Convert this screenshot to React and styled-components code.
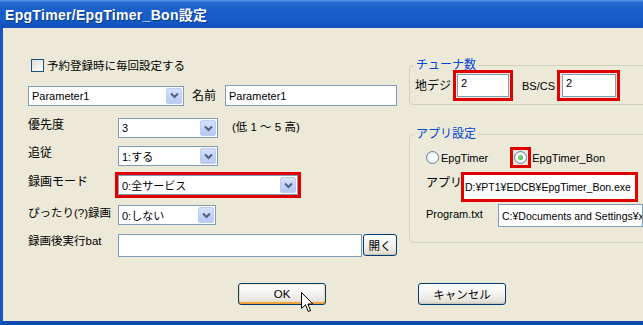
import React from 'react';
import styled, { createGlobalStyle, css } from 'styled-components';

const Global = createGlobalStyle`
  html, body {
    margin: 0;
    padding: 0;
    background: #ECE9D8;
  }
`;

const Window = styled.div`
  position: relative;
  width: 643px;
  height: 325px;
  overflow: hidden;
  display: flex;
  flex-direction: column;
  background: #ECE9D8;
  font-family: "Liberation Sans", "Noto Sans CJK JP", sans-serif;
  font-size: 12px;
  color: #000;
`;

const TitleBar = styled.div`
  height: 28px;
  flex: none;
  display: flex;
  align-items: center;
  padding-left: 5px;
  box-sizing: border-box;
  background: linear-gradient(to bottom, #5A9AEC 0%, #2A6DD6 8%, #1A5FCB 30%, #165BC6 70%, #0F50B8 100%);
  color: #fff;
  font-weight: bold;
  font-size: 14px;
  letter-spacing: 0.3px;
  text-shadow: 1px 1px 0 #0A3A8A;
`;

const Frame = styled.div`
  flex: 1;
  display: flex;
  flex-direction: column;
  border-left: 3px solid #1656C2;
  border-bottom: 4px solid #0F4DB4;
  padding: 30px 0 16px 25px;
  min-height: 0;
`;

const Columns = styled.div`
  display: flex;
  gap: 11px;
`;

const LeftCol = styled.div`
  width: 370px;
  flex: none;
  display: flex;
  flex-direction: column;
`;

const RightCol = styled.div`
  width: 250px;
  flex: none;
  display: flex;
  flex-direction: column;
  gap: 23px;
  margin-top: 1px;
`;

const Row = styled.div`
  display: flex;
  align-items: ${p => p.$center ? 'center' : 'flex-start'};
  height: ${p => p.$h || 20}px;
  margin-top: ${p => p.$mt || 0}px;
`;

const Label = styled.span`
  width: ${p => p.$w ? `${p.$w}px` : 'auto'};
  flex: none;
  line-height: 14px;
  font-size: ${p => p.$fs || 12}px;
  margin-top: ${p => p.$top || 0}px;
  margin-left: ${p => p.$ml || 0}px;
  margin-right: ${p => p.$mr || 0}px;
  white-space: nowrap;
`;

const CheckRow = styled.label`
  display: flex;
  align-items: center;
  gap: 3px;
  height: 14px;
  padding-left: 3px;
  font-size: 11.5px;
`;

const CheckBox = styled.span`
  width: 13px;
  height: 13px;
  box-sizing: border-box;
  border: 1px solid #1C5180;
  background: linear-gradient(135deg, #DCDBD5, #FFFFFF);
`;

const Combo = styled.div`
  width: ${p => p.$w}px;
  height: 20px;
  box-sizing: border-box;
  border: 1px solid #7F9DB9;
  background: #fff;
  display: flex;
  align-items: center;
  padding-left: 3px;
  flex: none;
  font-size: 11px;
`;

const ComboValue = styled.span`
  flex: 1;
  white-space: nowrap;
  overflow: hidden;
`;

const DropButton = styled.span`
  width: 16px;
  height: 16px;
  margin-right: 1px;
  box-sizing: border-box;
  border: 1px solid #BACDF6;
  border-radius: 2px;
  background: linear-gradient(to bottom, #D6E1FB, #B6C9F3);
  display: flex;
  align-items: center;
  justify-content: center;
`;

const TextBox = styled.div`
  width: ${p => p.$w}px;
  height: ${p => p.$h || 21}px;
  box-sizing: border-box;
  border: ${p => p.$bare ? 'none' : '1px solid #7F9DB9'};
  background: #fff;
  padding-left: ${p => p.$pl ?? 3}px;
  display: flex;
  align-items: ${p => p.$top ? 'flex-start' : 'center'};
  padding-top: ${p => p.$top ? 2 : 0}px;
  white-space: nowrap;
  overflow: hidden;
  flex: none;
  font-size: ${p => p.$fs || 11}px;
`;

const Highlight = styled.div`
  flex: none;
  border: 3px solid #E00000;
  padding: ${p => p.$pad || '0'};
  margin: ${p => p.$m || '0'};
  display: flex;
  align-items: ${p => p.$top ? 'flex-start' : 'center'};
  justify-content: center;
`;

const Button = styled.button`
  font: inherit;
  font-size: 11.5px;
  color: #000;
  width: ${p => p.$w || 88}px;
  height: ${p => p.$h || 22}px;
  margin-left: ${p => p.$ml || 0}px;
  padding: 0;
  box-sizing: border-box;
  border: 1px solid #003C74;
  border-radius: 3px;
  background: linear-gradient(to bottom, #FFFFFF 0%, #F3F2EE 50%, #E6E3DA 85%, #D6D0C5 100%);
  box-shadow: inset 0 -1px 0 #C9C5B8;
  position: relative;

  ${p => p.$default && css`
    box-shadow: inset 0 1px 0 #FFF0CF, inset 0 -2px 0 #F1A33A, inset 1px 0 0 #FBD88E, inset -1px 0 0 #FBD88E;
  `}
`;

const Group = styled.fieldset`
  margin: 0;
  padding: ${p => p.$pad};
  border: 1px solid #D0D0BF;
  border-radius: 4px;
  min-width: 0;
`;

const Legend = styled.legend`
  color: #0046D5;
  padding: 0 2px;
  margin-left: ${p => p.$lm}px;
  line-height: 12px;
  font-size: 12px;
`;

const RadioRow = styled.div`
  display: flex;
  align-items: center;
  height: 21px;
  font-size: 11px;
`;

const RadioItem = styled.span`
  display: flex;
  align-items: center;
  gap: 2px;
`;

const RadioCircle = styled.span`
  width: 13px;
  height: 13px;
  box-sizing: border-box;
  border-radius: 50%;
  border: 1px solid #5A7FAF;
  background: radial-gradient(circle at 60% 60%, #FFFFFF 30%, #E3E2DA 100%);
  display: flex;
  align-items: center;
  justify-content: center;

  &::after {
    content: '';
    display: ${p => p.$on ? 'block' : 'none'};
    width: 5px;
    height: 5px;
    border-radius: 50%;
    background: radial-gradient(circle at 40% 40%, #8FE08F, #21A121);
  }
`;

const Footer = styled.div`
  margin-top: auto;
  display: flex;
  gap: 92px;
  padding-left: 210px;
`;

const Cursor = styled.svg`
  position: absolute;
  left: 62px;
  top: 8px;
`;

const Chevron = () => (
  <svg width="9" height="7" viewBox="0 0 9 7">
    <polyline points="1,1.5 4.5,5 8,1.5" fill="none" stroke="#4D6185" strokeWidth="2" />
  </svg>
);

const Select = ({ w, value }) => (
  <Combo $w={w}>
    <ComboValue>{value}</ComboValue>
    <DropButton><Chevron /></DropButton>
  </Combo>
);

export default function App() {
  return (
    <Window>
      <Global />
      <TitleBar>EpgTimer/EpgTimer_Bon設定</TitleBar>
      <Frame>
        <Columns>
          <LeftCol>
            <CheckRow>
              <CheckBox />
              <span>予約登録時に毎回設定する</span>
            </CheckRow>
            <Row $h={21} $mt={13} $center>
              <Select w={156} value="Parameter1" />
              <Label $w={33} $ml={8}>名前</Label>
              <TextBox $w={172} $h={21}>Parameter1</TextBox>
            </Row>
            <Row $mt={12}>
              <Label $w={90}>優先度</Label>
              <Select w={100} value="3" />
              <Label $ml={14} $top={2} $fs={11.5}>(低 1 ～ 5 高)</Label>
            </Row>
            <Row $mt={8}>
              <Label $w={90}>追従</Label>
              <Select w={100} value="1:する" />
            </Row>
            <Row $mt={9}>
              <Label $w={90}>録画モード</Label>
              <Highlight $m="-3px">
                <Select w={180} value="0:全サービス" />
              </Highlight>
            </Row>
            <Row $mt={10}>
              <Label $w={90} $top={1} $fs={11.5}>ぴったり(?)録画</Label>
              <Select w={98} value="0:しない" />
            </Row>
            <Row $mt={9} $h={23}>
              <Label $w={90} $fs={11.5}>録画後実行bat</Label>
              <TextBox $w={244} $h={23} />
              <Button $w={34} $h={22} $ml={1}>開く</Button>
            </Row>
          </LeftCol>
          <RightCol>
            <Group $pad="0 0 2px 5px">
              <Legend $lm={-1}>チューナ数</Legend>
              <Row $h={33} $center $mt={-2}>
                <Label $mr={2}>地デジ</Label>
                <Highlight $pad="1px">
                  <TextBox $w={52} $h={23} $top>2</TextBox>
                </Highlight>
                <Label $ml={9} $mr={2} $fs={11}>BS/CS</Label>
                <Highlight $pad="1px 1px 1px 2px">
                  <TextBox $w={54} $h={23} $top>2</TextBox>
                </Highlight>
              </Row>
            </Group>
            <Group $pad="7px 0 15px 16px">
              <Legend $lm={-12}>アプリ設定</Legend>
              <RadioRow>
                <RadioItem>
                  <RadioCircle />
                  <span>EpgTimer</span>
                </RadioItem>
                <Highlight $pad="1px" $m="0 0 0 22px">
                  <RadioCircle $on />
                </Highlight>
                <Label $ml={1} $fs={11}>EpgTimer_Bon</Label>
              </RadioRow>
              <Row $h={30} $mt={4}>
                <Label $w={35} $top={4}>アプリ</Label>
                <Highlight $pad="0" $top>
                  <TextBox $w={171} $h={24} $pl={1} $bare $fs={10.5}>D:¥PT1¥EDCB¥EpgTimer_Bon.exe</TextBox>
                </Highlight>
              </Row>
              <Row $h={23} $mt={2}>
                <Label $w={72} $top={3} $fs={11}>Program.txt</Label>
                <TextBox $w={145} $h={23} $fs={10.5}>C:¥Documents and Settings¥x</TextBox>
              </Row>
            </Group>
          </RightCol>
        </Columns>
        <Footer>
          <Button $default>
            OK
            <Cursor width="13" height="21" viewBox="0 0 13 21">
              <path d="M0.5 0.5 L0.5 16.5 L4.5 12.8 L7.3 19.5 L9.6 18.5 L6.9 12 L11.8 12 Z" fill="#fff" stroke="#000" strokeWidth="1" strokeLinejoin="miter" />
            </Cursor>
          </Button>
          <Button>キャンセル</Button>
        </Footer>
      </Frame>
    </Window>
  );
}
